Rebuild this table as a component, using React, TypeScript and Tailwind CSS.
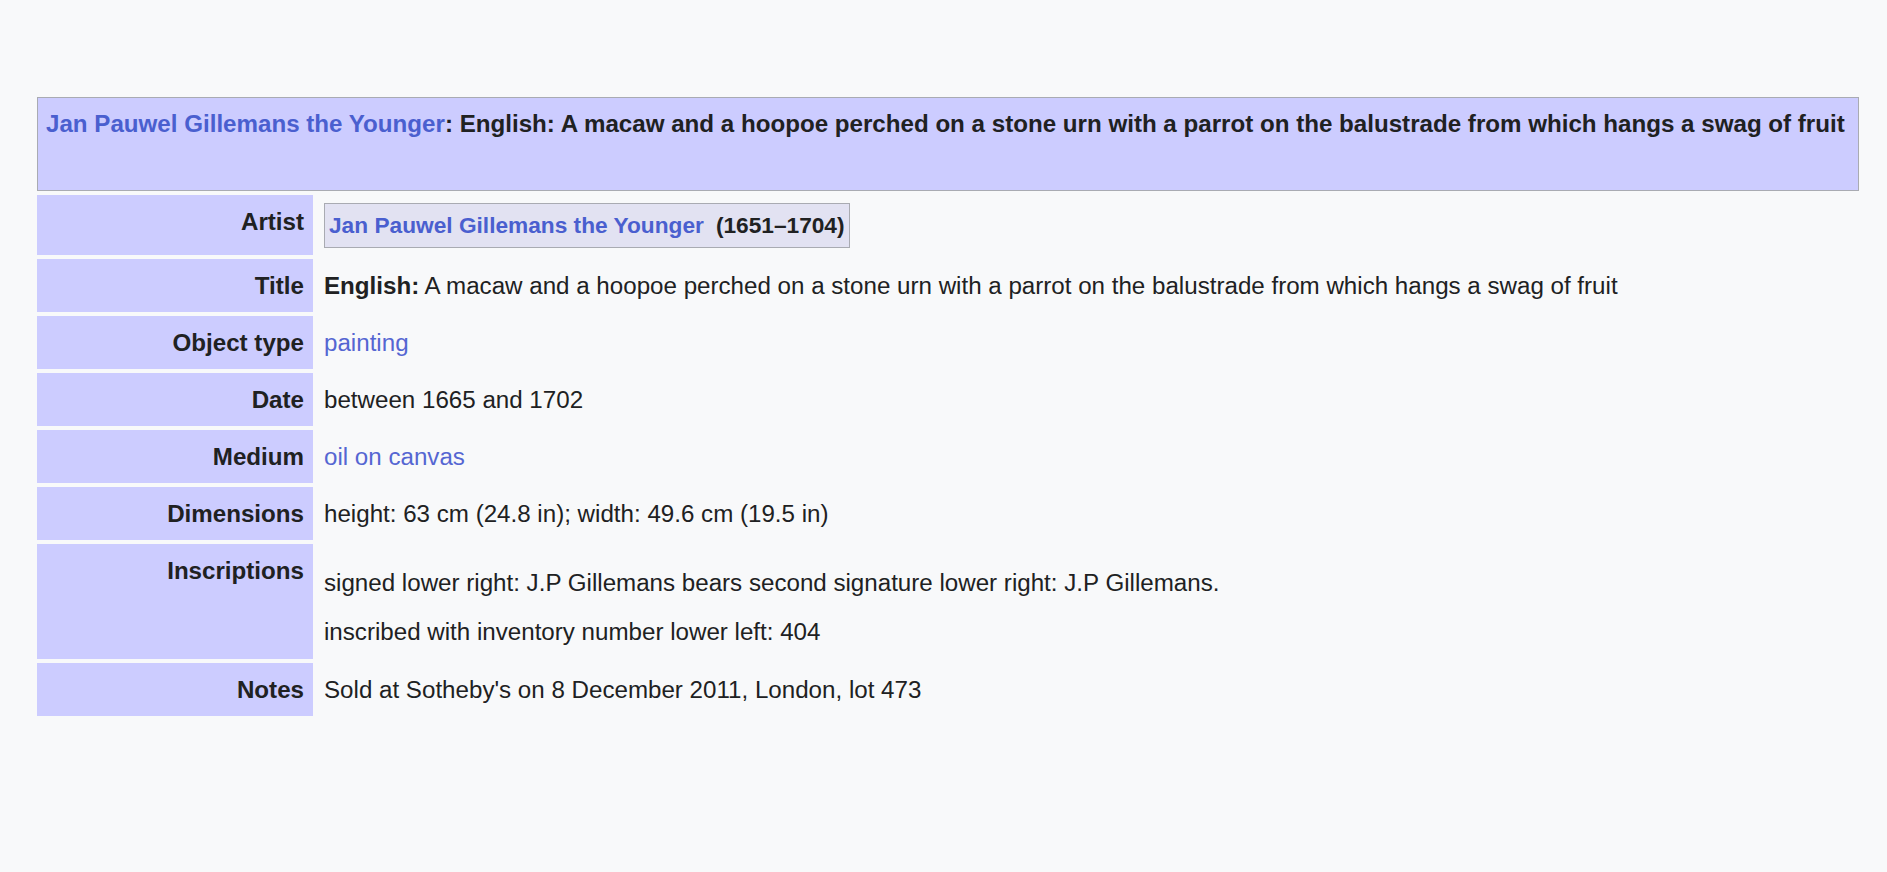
import React from 'react'

type Row = {
  label: string
  value: React.ReactNode
}

const linkCls = 'text-[#4a5fcf] font-bold'

const rows: Row[] = [
  {
    label: 'Title',
    value: (
      <span>
        <b>English:</b> A macaw and a hoopoe perched on a stone urn with a parrot on the balustrade from which hangs a swag of fruit
      </span>
    )
  },
  { label: 'Object type', value: <span className="text-[#5566d2]">painting</span> },
  { label: 'Date', value: 'between 1665 and 1702' },
  { label: 'Medium', value: <span className="text-[#5566d2]">oil on canvas</span> },
  { label: 'Dimensions', value: 'height: 63 cm (24.8 in); width: 49.6 cm (19.5 in)' }
]

const Label = ({ children }: { children: React.ReactNode }) => (
  <div className="bg-[#ccccff] text-right font-bold pr-[9px] py-[13px]">{children}</div>
)

export default function App() {
  return (
    <div
      className="min-h-screen bg-[#f8f9fa] text-[#202122] text-[24.15px] leading-[27px] pt-[97px]"
      style={{ fontFamily: '"Liberation Sans", Arial, sans-serif' }}
    >
      <div className="ml-[37px] w-[1822px]">
        {/* Header */}
        <div className="h-[94px] border border-[#a9abb2] bg-[#ccccff] pl-[8px] pt-[12px] font-bold whitespace-nowrap">
          <span className={linkCls}>Jan Pauwel Gillemans the Younger</span>: English: A macaw and a hoopoe perched on a
          stone urn with a parrot on the balustrade from which hangs a swag of fruit
        </div>

        {/* Info table */}
        <div className="mt-[4px] grid grid-cols-[276px_1fr] gap-x-[4px] gap-y-[4px]">
          <Label>Artist</Label>
          <div className="pl-[7px] pt-[8px] pb-[7px]">
            <div className="inline-flex items-center border border-[#a9abb2] bg-[#e2e2f2] pl-[4px] pr-[4px] pt-[8px] pb-[9px] text-[22.7px] leading-[26px] font-bold">
              <span className="text-[#4a5fcf]">Jan Pauwel Gillemans the Younger</span>
              <span className="ml-[12px]">(1651–1704)</span>
            </div>
          </div>

          {rows.map((row) => (
            <React.Fragment key={row.label}>
              <Label>{row.label}</Label>
              <div className="pl-[7px] py-[13px] whitespace-nowrap">{row.value}</div>
            </React.Fragment>
          ))}

          <Label>Inscriptions</Label>
          <div className="pl-[7px] pt-[13px] pb-[14px]">
            <div className="mt-[12px] flex flex-col gap-[22px]">
              <p>signed lower right: J.P Gillemans bears second signature lower right: J.P Gillemans.</p>
              <p>inscribed with inventory number lower left: 404</p>
            </div>
          </div>

          <Label>Notes</Label>
          <div className="pl-[7px] py-[13px]">Sold at Sotheby's on 8 December 2011, London, lot 473</div>
        </div>
      </div>
    </div>
  )
}
